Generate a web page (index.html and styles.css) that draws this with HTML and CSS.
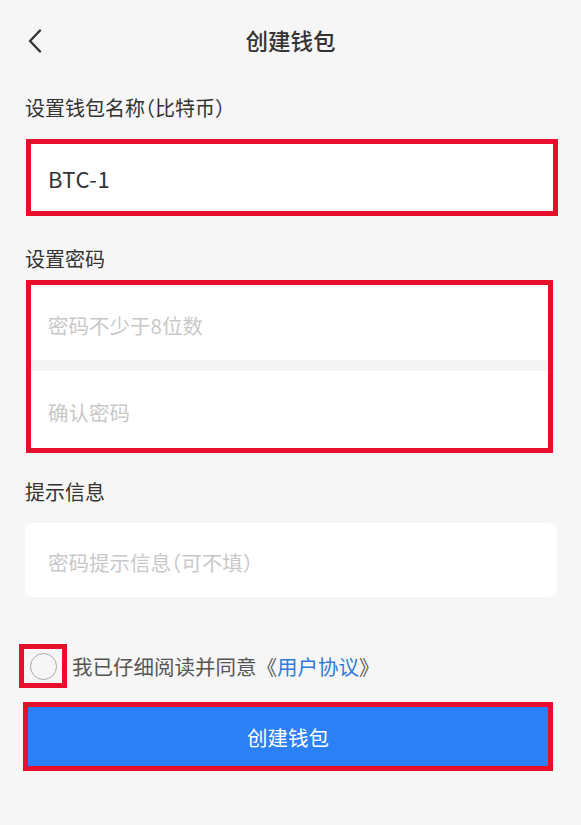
FILE: index.html
```html
<!DOCTYPE html>
<html lang="zh-CN">
<head>
<meta charset="utf-8">
<title>创建钱包</title>
<link rel="stylesheet" href="styles.css">
</head>
<body>
<header class="topbar">
  <div class="back">
    <svg width="16" height="24" viewBox="0 0 16 24"><path d="M13 1.5 L3 12 L13 22.5" fill="none" stroke="#333" stroke-width="2.4" stroke-linecap="round" stroke-linejoin="round"/></svg>
  </div>
  <h1 class="title">创建钱包</h1>
  <div></div>
</header>
<main class="page">
  <div class="label label-first">设置钱包名称（比特币）</div>
  <div class="mark mark-name">
    <input class="field field-name" type="text" value="BTC-1">
  </div>

  <div class="label label-pwd">设置密码</div>
  <div class="mark mark-pwd">
    <div class="pwd-group">
      <input class="field field-pwd1" type="password" placeholder="密码不少于8位数">
      <input class="field field-pwd2" type="password" placeholder="确认密码">
    </div>
  </div>

  <div class="label label-hint">提示信息</div>
  <input class="field field-hint" type="text" placeholder="密码提示信息（可不填）">

  <div class="agree">
    <div class="mark mark-check"><span class="circle"></span></div>
    <span class="agree-text">我已仔细阅读并同意《<span class="link">用户协议</span>》</span>
  </div>

  <div class="mark mark-btn">
    <button class="btn" type="button">创建钱包</button>
  </div>
</main>
</body>
</html>
```

FILE: styles.css
```css
* { box-sizing: border-box; }
html, body {
  margin: 0;
  padding: 0;
  background: #f6f6f6;
  font-family: "Noto Sans CJK SC", "Noto Sans", sans-serif;
  color: #333;
}
.topbar {
  height: 80px;
  display: grid;
  grid-template-columns: 1fr auto 1fr;
  align-items: center;
  padding: 0 25px;
}
.back {
  display: flex;
  align-items: center;
  margin-left: 2px;
  padding-top: 1px;
}
.title {
  margin: 0;
  font-size: 22.5px;
  font-weight: 500;
  line-height: 30px;
  color: #333;
  padding-left: 0;
}
.page {
  padding: 0 24px 0 25px;
  display: flex;
  flex-direction: column;
}
.label {
  font-size: 20px;
  line-height: 28px;
  color: #333;
}
.label-first {
  margin-top: 14px;
  font-feature-settings: "halt";
}
.label-pwd { margin-top: 29px; }
.label-hint { margin-top: 25px; }

.mark {
  border: 5px solid #e6102c;
}
.field {
  display: block;
  width: 100%;
  border: none;
  outline: none;
  background: #fff;
  font-family: "Noto Sans CJK SC", "Noto Sans", sans-serif;
  color: #333;
  margin: 0;
}
.field::placeholder {
  color: #c8c8c8;
  opacity: 1;
}
.mark-name {
  margin: 17px -1px 0 1px;
}
.field-name {
  height: 67px;
  padding: 0 0 0 17px;
  font-size: 22px;
  letter-spacing: 0.5px;
}
.mark-pwd {
  margin: 7px 4px 0 1px;
}
.pwd-group {
  display: flex;
  flex-direction: column;
  gap: 11px;
  background: #f5f5f5;
}
.field-pwd1, .field-pwd2 {
  font-size: 20.5px;
  padding: 4px 0 0 17px;
}
.field-pwd1 { height: 75px; }
.field-pwd2 { height: 77px; }

.field-hint {
  margin-top: 17px;
  height: 74px;
  border-radius: 8px;
  padding: 3px 0 0 23px;
  font-size: 20.5px;
  font-feature-settings: "halt";
}
.agree {
  margin-top: 47px;
  margin-left: -6px;
  display: flex;
  align-items: center;
  gap: 5px;
}
.mark-check {
  width: 48px;
  height: 44px;
  display: flex;
  align-items: center;
  justify-content: center;
  padding-left: 1px;
}
.circle {
  width: 27px;
  height: 27px;
  border-radius: 50%;
  border: 1.6px solid #a8a8a8;
  background: #f6f6f6;
}
.agree-text {
  font-size: 20.5px;
  line-height: 28px;
  color: #555;
}
.link { color: #2e7bd9; }

.mark-btn {
  margin: 14px 4px 0 -2px;
}
.btn {
  display: block;
  width: 100%;
  height: 59px;
  border: none;
  margin: 0;
  background: #2b80f5;
  color: #fff;
  font-family: "Noto Sans CJK SC", "Noto Sans", sans-serif;
  font-size: 20.5px;
  padding: 0;
}
```
